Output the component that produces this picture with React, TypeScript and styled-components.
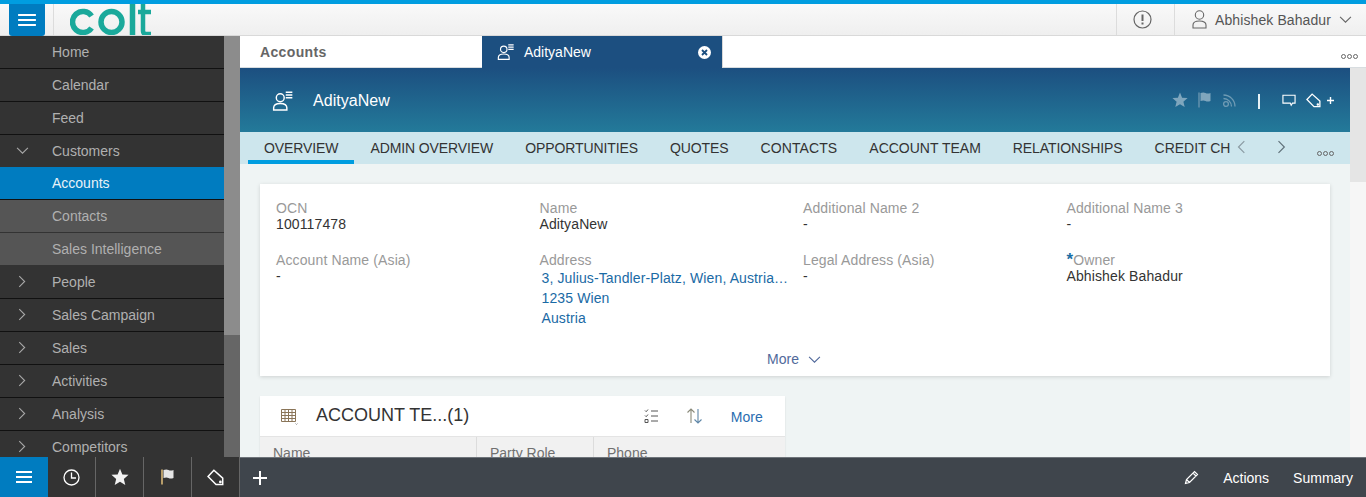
import * as React from "react";
import styled, { createGlobalStyle } from "styled-components";

const GlobalStyle = createGlobalStyle`
  html, body {
    margin: 0;
    padding: 0;
    height: 100%;
    overflow: hidden;
    font-family: "Liberation Sans", Arial, sans-serif;
  }
  * { box-sizing: border-box; }
`;

const Page = styled.div`
  display: flex;
  flex-direction: column;
  width: 1366px;
  height: 497px;
  overflow: hidden;
  border-top: 4px solid #009de0;
`;

const Header = styled.header`
  display: flex;
  align-items: stretch;
  flex: 0 0 32px;
  min-height: 0;
  background: linear-gradient(#f9f9f9, #efefef);
  border-bottom: 1px solid #d9d9d9;
`;

const MenuButton = styled.button`
  display: flex;
  align-items: center;
  justify-content: center;
  flex: none;
  width: 36px;
  height: 32px;
  margin-left: 9px;
  padding: 0;
  border: 0;
  border-radius: 0 0 3px 3px;
  background: #007cc0;
`;

const LogoSlot = styled.div`
  margin-left: 8px;
  padding-left: 16px;
  border-left: 1px solid #dcdcdc;
  height: 31px;
  flex: 1;
  overflow: hidden;
`;

const HeaderCell = styled.div`
  display: flex;
  align-items: center;
  border-left: 1px solid #dcdcdc;
  font-size: 14px;
  color: #555;
  letter-spacing: 0.1px;
`;

const AlertCell = styled(HeaderCell)`
  justify-content: center;
  width: 58px;
  padding-right: 6px;
`;

const UserCell = styled(HeaderCell)`
  gap: 8px;
  width: 192px;
  padding-left: 17px;
`;

const Body = styled.div`
  display: flex;
  flex: 1;
  min-height: 0;
`;

const Sidebar = styled.nav`
  display: flex;
  flex: 0 0 240px;
`;

const NavList = styled.ul`
  flex: 0 0 224px;
  margin: 0;
  padding: 0;
  list-style: none;
  background: #333;
  overflow: hidden;
`;

const NavItem = styled.li<{ $kind?: "active" | "sub" }>`
  display: flex;
  align-items: center;
  height: 33px;
  margin-top: ${(p) => (p.$kind === "active" ? "-1px" : "0")};
  padding-bottom: 1px;
  font-size: 14px;
  color: ${(p) => (p.$kind === "active" ? "#e8f2f8" : "#b0b0b0")};
  background: ${(p) =>
    p.$kind === "active" ? "#007cc0" : p.$kind === "sub" ? "#555" : "#333"};
  border-bottom: 1px solid ${(p) => (p.$kind === "sub" ? "#333" : "#111")};
`;

const NavChevron = styled.span`
  display: flex;
  justify-content: center;
  width: 44px;
  margin-right: 8px;
`;

const Scrollbar = styled.div`
  display: flex;
  flex-direction: column;
  flex: 0 0 16px;
  background: #666;
`;

const ScrollThumb = styled.div`
  flex: 0 0 299px;
  background: #8c8c8c;
`;

const Main = styled.main`
  display: flex;
  flex-direction: column;
  flex: 1;
  min-width: 0;
`;

const TabStrip = styled.div`
  display: flex;
  align-items: stretch;
  flex: 0 0 32px;
  min-height: 0;
  background: #fff;
  border-bottom: 1px solid #d8dde0;
`;

const HomeTab = styled.div`
  display: flex;
  align-items: center;
  width: 242px;
  padding-left: 20px;
  font-size: 14px;
  font-weight: bold;
  color: #666;
  letter-spacing: 0.35px;
`;

const ActiveTab = styled.div`
  display: flex;
  align-items: center;
  flex: none;
  width: 241px;
  height: 32px;
  padding: 0 11px 0 15px;
  background: #1c4f80;
  border-right: 1px solid #d8d8d8;
  font-size: 14px;
  color: #fff;
  gap: 9px;
`;

const TabTitle = styled.span`
  flex: 1;
`;

const Dots = styled.div`
  display: flex;
  align-items: flex-end;
  justify-content: flex-end;
  flex: 1;
  padding: 0 8px 8px 0;
  gap: 1px;
`;

const Dot = styled.i`
  width: 5px;
  height: 5px;
  border: 1px solid #666;
  border-radius: 50%;
`;

const Workspace = styled.div`
  display: flex;
  flex: 1;
  min-height: 0;
`;

const Content = styled.div`
  display: flex;
  flex-direction: column;
  flex: 1;
  min-width: 0;
  background: #eff4f4;
`;

const Hero = styled.div`
  display: flex;
  align-items: center;
  flex: 0 0 64px;
  padding: 2px 15px 0 32px;
  background: linear-gradient(#1c4f80, #237a9a);
  color: #fff;
  font-size: 16px;
  letter-spacing: 0.05px;
  gap: 19px;
`;

const HeroTitle = styled.div`
  flex: 1;
`;

const HeroActions = styled.div`
  display: flex;
  align-items: center;
  gap: 10px;
  margin-bottom: 2px;
`;

const HeroDivider = styled.span`
  width: 2px;
  height: 15px;
  margin: 2px 12px 0 11px;
  background: #e6f2f6;
`;

const HeroPlus = styled.svg`
  margin-left: -5px;
`;

const SubNav = styled.div`
  display: flex;
  align-items: stretch;
  flex: 0 0 32px;
  padding-left: 8px;
  background: #cde6ed;
`;

const SubTabs = styled.div`
  display: flex;
  flex: 0 0 983px;
  overflow: hidden;
`;

const SubTab = styled.div<{ $on?: boolean; $spacing: number }>`
  display: flex;
  align-items: center;
  flex: none;
  height: 32px;
  padding: 5px 16px 1px;
  font-size: 14px;
  letter-spacing: ${(p) => p.$spacing}px;
  color: #333;
  border-bottom: 4px solid ${(p) => (p.$on ? "#009de0" : "transparent")};
`;

const SubNavArrows = styled.div`
  display: flex;
  align-items: center;
  gap: 26px;
  padding-left: 4px;
  padding-bottom: 2px;
`;

const SubNavDots = styled(Dots)`
  padding: 0 16px 8px 0;
`;

const Cards = styled.div`
  display: flex;
  flex-direction: column;
  align-items: flex-start;
  gap: 20px;
  padding: 20px 20px 0;
`;

const OverviewCard = styled.section`
  width: 1070px;
  height: 192px;
  padding: 16px 16px 0;
  background: #fff;
  box-shadow: 0 1px 4px rgba(0, 0, 0, 0.14);
`;

const FieldGrid = styled.div`
  display: grid;
  grid-template-columns: repeat(4, 263.5px);
  row-gap: 20px;
  height: 128px;
`;

const Field = styled.div`
  font-size: 14px;
  line-height: 16px;
  letter-spacing: 0.12px;
  min-width: 0;
`;

const Label = styled.div`
  color: #999;
`;

const Value = styled.div`
  color: #333;
`;

const Required = styled.span`
  color: #1c6ea4;
  font-weight: bold;
  font-size: 17px;
  line-height: 10px;
`;

const AddressLines = styled.div`
  padding-left: 2px;
  color: #1a6aa5;
  line-height: 20px;
`;

const AddressLine = styled.div`
  white-space: nowrap;
`;

const MoreRow = styled.div`
  display: flex;
  align-items: center;
  justify-content: center;
  gap: 9px;
  height: 16px;
  margin-top: 23px;
  padding-right: 2px;
  font-size: 14px;
  color: #51699b;
`;

const ListCard = styled.section`
  width: 525px;
  background: #fff;
  box-shadow: 0 1px 2px rgba(0, 0, 0, 0.1);
`;

const ListHead = styled.div`
  display: flex;
  align-items: center;
  height: 41px;
  padding: 0 22px 0 20px;
  border-bottom: 1px solid #e4e4e4;
`;

const ListTitle = styled.div`
  flex: 1;
  margin-left: 17px;
  padding-bottom: 1px;
  font-size: 18px;
  color: #333;
`;

const ListTools = styled.div`
  display: flex;
  align-items: center;
  gap: 27px;
`;

const MoreLink = styled.span`
  padding-top: 1px;
  font-size: 14px;
  letter-spacing: 0.1px;
  color: #2a6db0;
`;

const ColumnRow = styled.div`
  display: grid;
  grid-template-columns: 217px 117px 1fr;
  background: #f1f1f1;
  height: 40px;
`;

const Column = styled.div`
  padding: 8px 0 0 13px;
  font-size: 14px;
  color: #707070;
  border-right: 1px solid #dcdcdc;
  &:last-child { border-right: 0; }
`;

const PageScroll = styled.div`
  display: flex;
  flex-direction: column;
  flex: 0 0 16px;
  background: #f6f6f6;
`;

const PageThumb = styled.div`
  flex: 0 0 114px;
  background: #e5e5e5;
`;

const Footer = styled.footer`
  display: flex;
  align-items: stretch;
  flex: 0 0 40px;
  background: #3f454c;
  border-top: 1px solid #6e747a;
  color: #fff;
  font-size: 14px;
`;

const Launcher = styled.div`
  display: flex;
  flex: 0 0 240px;
  margin-top: -1px;
  background: #333;
`;

const LauncherCell = styled.div<{ $active?: boolean }>`
  display: flex;
  align-items: center;
  justify-content: center;
  flex: 0 0 48px;
  background: ${(p) => (p.$active ? "#007cc0" : "transparent")};
  border-right: 1px solid ${(p) => (p.$active ? "#007cc0" : "#666")};
`;

const AddCell = styled.div`
  display: flex;
  align-items: center;
  justify-content: center;
  flex: 0 0 40px;
`;

const FooterRight = styled.div`
  display: flex;
  align-items: center;
  justify-content: flex-end;
  flex: 1;
  padding-right: 13px;
  gap: 24px;
`;

const Hamburger = ({ w = 18 }: { w?: number }) => (
  <svg width={w} height="14" viewBox="0 0 18 14" preserveAspectRatio="none">
    <path d="M1 2h16M1 7h16M1 12h16" stroke="#fff" strokeWidth="2" />
  </svg>
);

const Logo = () => (
  <svg width="90" height="31" viewBox="0 0 90 31" fill="none" stroke="#1aa99b" strokeWidth="5.5">
    <path d="M21.6 12A10.5 10.5 0 1 0 21.6 24" />
    <circle cx="41.5" cy="18" r="10.5" />
    <path d="M62.5 0v31" />
    <path d="M73 0v27q0 3 3 3h5M68 8h13" strokeWidth="4.5" />
  </svg>
);

const PersonList = ({ size = 20 }: { size?: number }) => (
  <svg width={size} height={size} viewBox="0 0 20 20" fill="none" stroke="#fff" strokeWidth="1.3">
    <circle cx="7.5" cy="7" r="3.6" />
    <path d="M1.5 18.2v-2c0-2.6 2.6-4 6-4s6 1.4 6 4v2z" />
    <path d="M12.5 2h6M12.5 4.5h6M12.5 7h6" />
  </svg>
);

const Chevron = ({ dir, color = "#a8a8a8", size = 11 }: { dir: "r" | "d" | "l"; color?: string; size?: number }) => {
  const d = dir === "r" ? "M3 1l5 5-5 5" : dir === "l" ? "M8 1L3 6l5 5" : "M1 3.5l5 5 5-5";
  return (
    <svg width={size} height={size} viewBox="0 0 12 12" fill="none" stroke={color} strokeWidth="1">
      <path d={d} />
    </svg>
  );
};

const Star = ({ color, size = 16 }: { color: string; size?: number }) => (
  <svg width={size} height={size} viewBox="0 0 16 16">
    <path fill={color} d="M8 .6l2.1 5.1 5.5.4-4.2 3.6 1.3 5.4L8 12.2l-4.7 2.9 1.3-5.4L.4 6.1l5.5-.4z" />
  </svg>
);

const Flag = ({ color, pole }: { color: string; pole: string }) => (
  <svg width="14" height="16" viewBox="0 0 14 16">
    <path d="M1 .5v15" stroke={pole} strokeWidth="1.6" />
    <path fill={color} d="M2.5 1q3-1 5 0t5 0v8q-3 1-5 0t-5 0z" />
  </svg>
);

const Tag = ({ size = 15, color = "#fff" }: { size?: number; color?: string }) => (
  <svg width={size} height={size} viewBox="0 0 16 16" fill="none" stroke={color} strokeWidth="1.4">
    <path d="M6.5 1.2L1 7l7.5 7.5h6.3V8.6z" />
    <circle cx="12.6" cy="12.2" r=".6" fill={color} />
  </svg>
);

const navItems: { label: string; chevron?: "r" | "d"; kind?: "active" | "sub" }[] = [
  { label: "Home" },
  { label: "Calendar" },
  { label: "Feed" },
  { label: "Customers", chevron: "d" },
  { label: "Accounts", kind: "active" },
  { label: "Contacts", kind: "sub" },
  { label: "Sales Intelligence", kind: "sub" },
  { label: "People", chevron: "r" },
  { label: "Sales Campaign", chevron: "r" },
  { label: "Sales", chevron: "r" },
  { label: "Activities", chevron: "r" },
  { label: "Analysis", chevron: "r" },
  { label: "Competitors", chevron: "r" },
];

const subTabs = [
  { label: "OVERVIEW", spacing: -0.1 },
  { label: "ADMIN OVERVIEW", spacing: -0.1 },
  { label: "OPPORTUNITIES", spacing: -0.1 },
  { label: "QUOTES", spacing: -0.1 },
  { label: "CONTACTS", spacing: 0.1 },
  { label: "ACCOUNT TEAM", spacing: 0 },
  { label: "RELATIONSHIPS", spacing: -0.1 },
  { label: "CREDIT CHECK", spacing: 0 },
];

function App() {
  return (
    <Page>
      <GlobalStyle />
      <Header>
        <MenuButton>
          <Hamburger w={20} />
        </MenuButton>
        <LogoSlot>
          <Logo />
        </LogoSlot>
        <AlertCell>
          <svg width="19" height="19" viewBox="0 0 19 19" fill="none" stroke="#666" strokeWidth="1.2">
            <circle cx="9.5" cy="9.5" r="8.5" />
            <path d="M9.5 4.5v6.5M9.5 12.5v2" strokeWidth="2" />
          </svg>
        </AlertCell>
        <UserCell>
          <svg width="15" height="19" viewBox="0 0 15 19" fill="none" stroke="#666" strokeWidth="1.1">
            <circle cx="7.5" cy="5" r="4.2" />
            <path d="M1 18v-3c0-2.6 3-4 6.5-4s6.5 1.4 6.5 4v3z" />
          </svg>
          Abhishek Bahadur
          <Chevron dir="d" color="#666" size={13} />
        </UserCell>
      </Header>
      <Body>
        <Sidebar>
          <NavList>
            {navItems.map((item) => (
              <NavItem key={item.label} $kind={item.kind}>
                <NavChevron>{item.chevron && <Chevron dir={item.chevron} size={13} />}</NavChevron>
                {item.label}
              </NavItem>
            ))}
          </NavList>
          <Scrollbar>
            <ScrollThumb />
          </Scrollbar>
        </Sidebar>
        <Main>
          <TabStrip>
            <HomeTab>Accounts</HomeTab>
            <ActiveTab>
              <PersonList size={18} />
              <TabTitle>AdityaNew</TabTitle>
              <svg width="13" height="13" viewBox="0 0 13 13">
                <circle cx="6.5" cy="6.5" r="6.5" fill="#fff" />
                <path d="M4 4l5 5M9 4l-5 5" stroke="#1c4f80" strokeWidth="1.8" />
              </svg>
            </ActiveTab>
            <Dots>
              <Dot />
              <Dot />
              <Dot />
            </Dots>
          </TabStrip>
          <Workspace>
            <Content>
              <Hero>
                <PersonList size={22} />
                <HeroTitle>AdityaNew</HeroTitle>
                <HeroActions>
                  <Star color="#7fa6bd" size={16} />
                  <Flag color="#7fa6bd" pole="#5f8fab" />
                  <svg width="15" height="15" viewBox="0 0 15 15" fill="none" stroke="#6f9bb4" strokeWidth="1.3">
                    <circle cx="4" cy="11" r="2.4" />
                    <path d="M1.5 5.5a8 8 0 0 1 8 8M1.5 2a11.5 11.5 0 0 1 11.5 11.5" />
                  </svg>
                  <HeroDivider />
                  <svg width="14" height="13" viewBox="0 0 16 15" fill="none" stroke="#fff" strokeWidth="1.3">
                    <path d="M1 1.5h14v9h-3l-1.5 2.5-1-2.5H1z" />
                  </svg>
                  <Tag />
                  <HeroPlus width="9" height="9" viewBox="0 0 9 9">
                    <path d="M4.5 1v7M1 4.5h7" stroke="#fff" strokeWidth="1.4" />
                  </HeroPlus>
                </HeroActions>
              </Hero>
              <SubNav>
                <SubTabs>
                  {subTabs.map((t, i) => (
                    <SubTab key={t.label} $on={i === 0} $spacing={t.spacing}>
                      {t.label}
                    </SubTab>
                  ))}
                </SubTabs>
                <SubNavArrows>
                  <Chevron dir="l" color="#8a9aa2" size={14} />
                  <Chevron dir="r" color="#5f7079" size={14} />
                </SubNavArrows>
                <SubNavDots>
                  <Dot />
                  <Dot />
                  <Dot />
                </SubNavDots>
              </SubNav>
              <Cards>
                <OverviewCard>
                  <FieldGrid>
                    <Field>
                      <Label>OCN</Label>
                      <Value>100117478</Value>
                    </Field>
                    <Field>
                      <Label>Name</Label>
                      <Value>AdityaNew</Value>
                    </Field>
                    <Field>
                      <Label>Additional Name 2</Label>
                      <Value>-</Value>
                    </Field>
                    <Field>
                      <Label>Additional Name 3</Label>
                      <Value>-</Value>
                    </Field>
                    <Field>
                      <Label>Account Name (Asia)</Label>
                      <Value>-</Value>
                    </Field>
                    <Field>
                      <Label>Address</Label>
                      <AddressLines>
                        <AddressLine>3, Julius-Tandler-Platz, Wien, Austria…</AddressLine>
                        <AddressLine>1235 Wien</AddressLine>
                        <AddressLine>Austria</AddressLine>
                      </AddressLines>
                    </Field>
                    <Field>
                      <Label>Legal Address (Asia)</Label>
                      <Value>-</Value>
                    </Field>
                    <Field>
                      <Label>
                        <Required>*</Required>Owner
                      </Label>
                      <Value>Abhishek Bahadur</Value>
                    </Field>
                  </FieldGrid>
                  <MoreRow>
                    More
                    <Chevron dir="d" color="#51699b" size={13} />
                  </MoreRow>
                </OverviewCard>
                <ListCard>
                  <ListHead>
                    <svg width="19" height="18" viewBox="0 0 19 18" fill="none" stroke="#8a7558" strokeWidth="1">
                      <path d="M1.5 2.5h14v12h-14zM1.5 5.5h14M1.5 8.5h14M1.5 11.5h14M5 2.5v12M8.5 2.5v12M12 2.5v12" />
                      <path d="M15.5 16.5l1 1 1-1" stroke="#999" />
                    </svg>
                    <ListTitle>ACCOUNT TE...(1)</ListTitle>
                    <ListTools>
                      <svg width="15" height="16" viewBox="0 0 15 16" fill="none" stroke="#555" strokeWidth="1">
                        <path d="M1 2.5l1.2 1.2L4 1.5M1 7.5l1.2 1.2L4 6.5M1 11.5h3v3H1zM7 3h7M7 8h7M7 13h7" />
                      </svg>
                      <svg width="18" height="18" viewBox="0 0 18 18" fill="none" strokeWidth="1.1">
                        <path d="M5 16V2M1.5 5.5L5 2l3.5 3.5" stroke="#8a8a7a" />
                        <path d="M12 2v14M8.5 12.5L12 16l3.5-3.5" stroke="#5f87a8" />
                      </svg>
                      <MoreLink>More</MoreLink>
                    </ListTools>
                  </ListHead>
                  <ColumnRow>
                    <Column>Name</Column>
                    <Column>Party Role</Column>
                    <Column>Phone</Column>
                  </ColumnRow>
                </ListCard>
              </Cards>
            </Content>
            <PageScroll>
              <PageThumb />
            </PageScroll>
          </Workspace>
        </Main>
      </Body>
      <Footer>
        <Launcher>
          <LauncherCell $active>
            <Hamburger />
          </LauncherCell>
          <LauncherCell>
            <svg width="17" height="17" viewBox="0 0 17 17" fill="none" stroke="#fff" strokeWidth="1.3">
              <circle cx="8.5" cy="8.5" r="7.5" />
              <path d="M8.5 3.5v5.5H13" />
            </svg>
          </LauncherCell>
          <LauncherCell>
            <Star color="#f2f2f2" size={18} />
          </LauncherCell>
          <LauncherCell>
            <Flag color="#e6e6e6" pole="#d9b878" />
          </LauncherCell>
          <LauncherCell>
            <Tag size={17} />
          </LauncherCell>
        </Launcher>
        <AddCell>
          <svg width="16" height="16" viewBox="0 0 16 16">
            <path d="M8 1v14M1 8h14" stroke="#fff" strokeWidth="2" />
          </svg>
        </AddCell>
        <FooterRight>
          <svg width="15" height="15" viewBox="0 0 15 15" fill="none" stroke="#fff" strokeWidth="1.2">
            <path d="M1.5 13.5l1-4L10.5 1.5l3 3-8 8zM9 3l3 3M2.5 9.5l3 3" />
          </svg>
          <span>Actions</span>
          <span>Summary</span>
        </FooterRight>
      </Footer>
    </Page>
  );
}

export default App;
